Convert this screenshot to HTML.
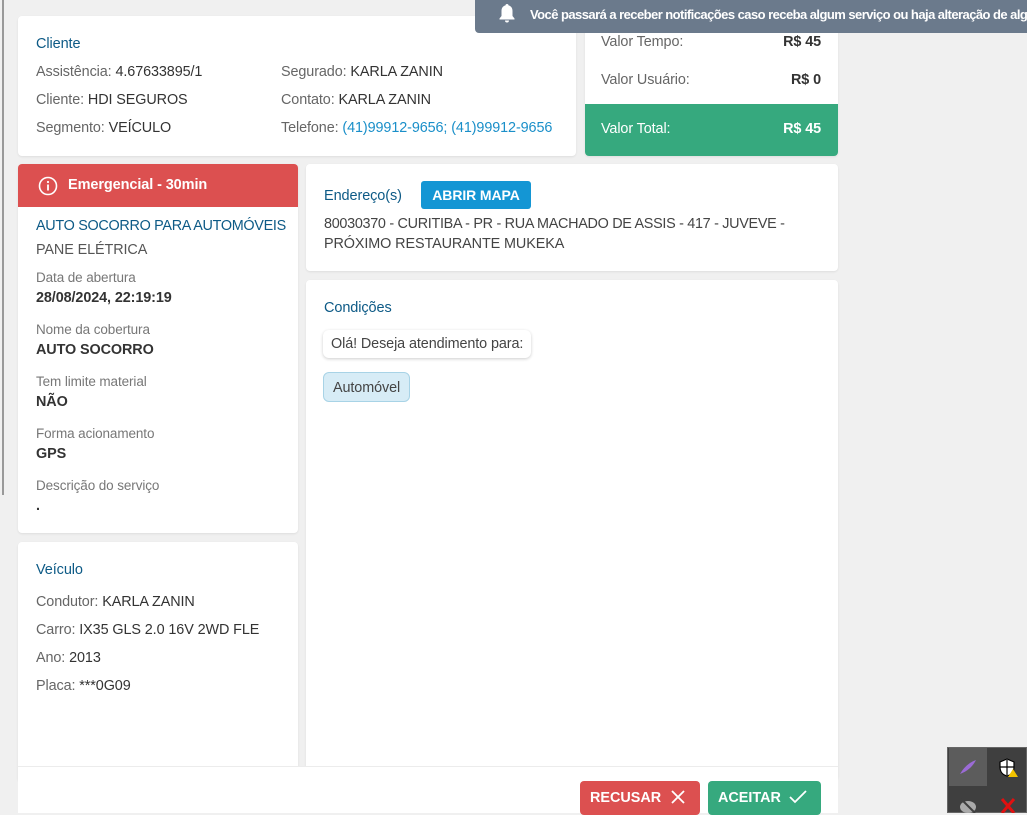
<!DOCTYPE html>
<html><head><meta charset="utf-8"><style>
*{margin:0;padding:0;box-sizing:border-box}
body{width:1027px;height:813px;background:#f0f0f0;font-family:"Liberation Sans",sans-serif;font-size:14.4px;color:#333;position:relative;overflow:hidden;letter-spacing:-0.1px}
.a{position:absolute;white-space:nowrap}
.card{position:absolute;background:#fff;border-radius:4px;box-shadow:0 1px 2px rgba(0,0,0,.08)}
.h{color:#0d5a86;font-size:14.5px}
.l{color:#666}
.lab{color:#777;font-size:13.5px}
.v{color:#333;font-weight:bold;font-size:14.4px}
.link{color:#1a8fc9}
</style></head><body>
<div class="a" style="left:2px;top:0;width:2px;height:495px;background:#999"></div>

<div class="card" style="left:18px;top:16px;width:558px;height:140px">
<div class="a h" style="left:18px;top:20px">Cliente</div>
<div class="a" style="left:18px;top:48px"><span class="l">Assistência:</span> 4.67633895/1</div>
<div class="a" style="left:18px;top:76px"><span class="l">Cliente:</span> HDI SEGUROS</div>
<div class="a" style="left:18px;top:104px"><span class="l">Segmento:</span> VEÍCULO</div>
<div class="a" style="left:263px;top:48px"><span class="l">Segurado:</span> KARLA ZANIN</div>
<div class="a" style="left:263px;top:76px"><span class="l">Contato:</span> KARLA ZANIN</div>
<div class="a" style="left:263px;top:104px"><span class="l">Telefone:</span> <span class="link">(41)99912-9656; (41)99912-9656</span></div>
</div>

<div class="card" style="left:585px;top:0;width:253px;height:156px;overflow:hidden">
<div class="a l" style="left:16px;top:34px">Valor Tempo:</div>
<div class="a" style="right:17px;top:34px;font-weight:bold">R$ 45</div>
<div class="a l" style="left:16px;top:72px">Valor Usuário:</div>
<div class="a" style="right:17px;top:72px;font-weight:bold">R$ 0</div>
<div class="a" style="left:0;top:104px;width:253px;height:52px;background:#36a97e"></div>
<div class="a" style="left:16px;top:121px;color:#fff">Valor Total:</div>
<div class="a" style="right:17px;top:121px;color:#fff;font-weight:bold">R$ 45</div>
</div>

<div class="a" style="left:475px;top:0;width:560px;height:33px;background:#6b7a8c;border-radius:0 0 0 4px"></div>
<svg class="a" style="left:498px;top:3px" width="18" height="20" viewBox="0 0 18 20"><path d="M9 1c-1 0-1.5.7-1.5 1.4C5 3 3.5 5 3.5 8v5L1.5 15.5v1h15v-1L14.5 13V8c0-3-1.5-5-4-5.6C10.5 1.7 10 1 9 1z" fill="#fff"/><path d="M7 17.5a2 2 0 0 0 4 0z" fill="#fff"/></svg>
<div class="a" style="left:530px;top:7px;color:#fff;font-size:13px;font-weight:bold;letter-spacing:-0.55px">Você passará a receber notificações caso receba algum serviço ou haja alteração de alg</div>

<div class="card" style="left:18px;top:164px;width:280px;height:369px;overflow:hidden">
<div class="a" style="left:0;top:0;width:280px;height:43px;background:#dc5050"></div>
<svg class="a" style="left:20px;top:12px" width="20" height="20" viewBox="0 0 20 20"><circle cx="10" cy="10" r="8.5" fill="none" stroke="#fff" stroke-width="1.6"/><rect x="9.1" y="8.5" width="1.8" height="6" fill="#fff"/><circle cx="10" cy="6" r="1.1" fill="#fff"/></svg>
<div class="a" style="left:50px;top:13px;color:#fff;font-weight:bold;font-size:14.5px">Emergencial - 30min</div>
<div class="a" style="left:18px;top:54px;color:#0d5a86;letter-spacing:-0.3px">AUTO SOCORRO PARA AUTOMÓVEIS</div>
<div class="a" style="left:18px;top:78px;color:#555">PANE ELÉTRICA</div>
<div class="a lab" style="left:18px;top:106px">Data de abertura</div>
<div class="a v" style="left:18px;top:126px">28/08/2024, 22:19:19</div>
<div class="a lab" style="left:18px;top:158px">Nome da cobertura</div>
<div class="a v" style="left:18px;top:178px">AUTO SOCORRO</div>
<div class="a lab" style="left:18px;top:210px">Tem limite material</div>
<div class="a v" style="left:18px;top:230px">NÃO</div>
<div class="a lab" style="left:18px;top:262px">Forma acionamento</div>
<div class="a v" style="left:18px;top:282px">GPS</div>
<div class="a lab" style="left:18px;top:314px">Descrição do serviço</div>
<div class="a v" style="left:18px;top:334px">.</div>
</div>

<div class="card" style="left:18px;top:542px;width:280px;height:240px">
<div class="a h" style="left:18px;top:20px">Veículo</div>
<div class="a" style="left:18px;top:52px"><span class="l">Condutor:</span> KARLA ZANIN</div>
<div class="a" style="left:18px;top:80px"><span class="l">Carro:</span> IX35 GLS 2.0 16V 2WD FLE</div>
<div class="a" style="left:18px;top:108px"><span class="l">Ano:</span> 2013</div>
<div class="a" style="left:18px;top:136px"><span class="l">Placa:</span> ***0G09</div>
</div>

<div class="card" style="left:306px;top:164px;width:532px;height:107px">
<div class="a h" style="left:18px;top:24px">Endereço(s)</div>
<div class="a" style="left:115px;top:17px;width:110px;height:28px;background:#1496d4;border-radius:3px;color:#fff;font-weight:bold;text-align:center;line-height:28px;font-size:14px">ABRIR MAPA</div>
<div class="a" style="left:18px;top:52px;color:#444;letter-spacing:-0.3px">80030370 - CURITIBA - PR - RUA MACHADO DE ASSIS - 417 - JUVEVE -</div>
<div class="a" style="left:18px;top:72px;color:#444">PRÓXIMO RESTAURANTE MUKEKA</div>
</div>

<div class="card" style="left:306px;top:280px;width:532px;height:500px">
<div class="a h" style="left:18px;top:20px">Condições</div>
<div class="a" style="left:17px;top:50px;height:28px;padding:0 8px;line-height:28px;border-radius:6px;box-shadow:0 1px 3px rgba(0,0,0,.2);background:#fff;color:#444">Olá! Deseja atendimento para:</div>
<div class="a" style="left:17px;top:92px;height:30px;padding:0 9px;line-height:30px;border-radius:6px;background:#d7ecf6;border:1px solid #a8d3e6;color:#444">Automóvel</div>
</div>

<div class="a" style="left:18px;top:766px;width:820px;height:47px;background:#fff;border-top:1px solid #ececec"></div>
<div class="a" style="left:580px;top:781px;width:120px;height:34px;background:#dc5050;border-radius:4px;color:#fff;font-weight:bold;line-height:34px;padding-left:10px;letter-spacing:0">RECUSAR</div>
<svg class="a" style="left:670px;top:789px" width="16" height="16" viewBox="0 0 16 16"><path d="M2 2L14 14M14 2L2 14" stroke="#fff" stroke-width="1.8"/></svg>
<div class="a" style="left:708px;top:781px;width:113px;height:34px;background:#36a97e;border-radius:4px;color:#fff;font-weight:bold;line-height:34px;padding-left:10px;letter-spacing:0">ACEITAR</div>
<svg class="a" style="left:788px;top:789px" width="20" height="16" viewBox="0 0 20 16"><path d="M2 8L7 13L18 2" fill="none" stroke="#fff" stroke-width="1.8"/></svg>

<div class="a" style="left:947px;top:747px;width:80px;height:66px;background:#3f3f3f;border:1px solid #666"></div>
<div class="a" style="left:949px;top:748px;width:38px;height:38px;background:#5c5c5c"></div>
<svg class="a" style="left:958px;top:757px" width="20" height="20" viewBox="0 0 20 20"><path d="M2 17C6 10 12 5 18 3C15 9 10 14 2 17z" fill="#9b6bd6"/></svg>
<svg class="a" style="left:998px;top:757px" width="22" height="22" viewBox="0 0 22 22"><path d="M9 2L2 5v5c0 5 3 8 7 9 4-1 7-4 7-9V5z" fill="#fff" stroke="#000" stroke-width="1.2"/><path d="M9 3v15M2.5 10h13" stroke="#000" stroke-width="1.2"/><path d="M15 12l5 8h-10z" fill="#f2c200"/></svg>
<svg class="a" style="left:958px;top:797px" width="20" height="16" viewBox="0 0 20 16"><ellipse cx="10" cy="10" rx="8" ry="6" fill="#aaa"/><path d="M3 2L17 16" stroke="#3f3f3f" stroke-width="2"/></svg>
<svg class="a" style="left:998px;top:797px" width="20" height="16" viewBox="0 0 20 16"><path d="M4 2L16 16M16 2L4 16" stroke="#e01010" stroke-width="3"/></svg>
</body></html>
